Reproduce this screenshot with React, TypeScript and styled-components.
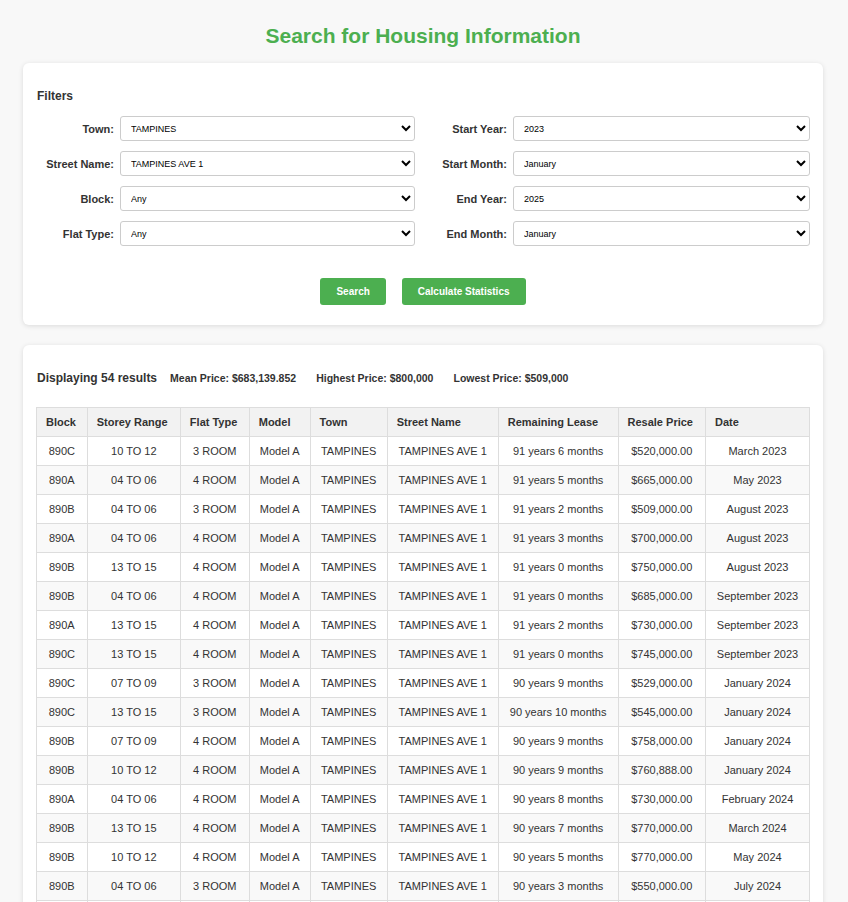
import React from "react";
import styled, { createGlobalStyle } from "styled-components";

const Global = createGlobalStyle`
  html, body { margin: 0; padding: 0; background: #f8f8f8; }
  body { font-family: "Liberation Sans", Arial, sans-serif; color: #333; }
`;

const Page = styled.div`
  padding: 22px 0 20px 23px;
  display: flex;
  flex-direction: column;
`;

const Title = styled.h1`
  margin: 0 0 13px;
  width: 800px;
  text-align: center;
  color: #4caf50;
  font-size: 21px;
  line-height: 28px;
  font-weight: bold;
`;

const Card = styled.section<{ $pt: number }>`
  box-sizing: border-box;
  width: 800px;
  background: #fff;
  border-radius: 6px;
  box-shadow: 0 1px 5px rgba(0, 0, 0, 0.12);
  padding: ${(p) => p.$pt}px 13px 20px 13px;
  & + & { margin-top: 20px; }
`;

const SectionTitle = styled.h3`
  margin: 0 0 13px 1px;
  font-size: 12px;
  line-height: 14px;
  font-weight: bold;
`;

const FilterGrid = styled.div`
  display: grid;
  grid-template-columns: 1fr 1fr;
  column-gap: 16px;
  row-gap: 10px;
`;

const Field = styled.label`
  display: flex;
  align-items: center;
  gap: 6px;
`;

const Label = styled.span<{ $w: number }>`
  width: ${(p) => p.$w}px;
  text-align: right;
  font-size: 11px;
  font-weight: bold;
  color: #333;
  flex-shrink: 0;
  white-space: nowrap;
`;

const Select = styled.select`
  flex: 1;
  height: 25px;
  border: 1px solid #ccc;
  border-radius: 3px;
  background: #fff;
  font-family: "Liberation Sans", Arial, sans-serif;
  font-size: 9px;
  color: #000;
  padding: 0 6px;
`;

const Buttons = styled.div`
  display: flex;
  justify-content: center;
  gap: 16px;
  margin-top: 32px;
`;

const Button = styled.button`
  height: 27px;
  padding: 0 16px;
  background: #4caf50;
  color: #fff;
  border: none;
  border-radius: 3px;
  font-family: "Liberation Sans", Arial, sans-serif;
  font-size: 10px;
  font-weight: bold;
  cursor: pointer;
`;

const Summary = styled.div`
  display: flex;
  align-items: baseline;
  gap: 13px;
  margin: 0 0 22px 1px;
  font-weight: bold;
`;

const Count = styled.span`
  font-size: 12px;
`;

const Stat = styled.span`
  font-size: 10.5px;
  margin-right: 7px;
`;

const Table = styled.table`
  width: 100%;
  border-collapse: collapse;
  font-size: 11px;
`;

const Th = styled.th`
  background: #f2f2f2;
  border: 1px solid #ddd;
  text-align: left;
  padding: 8px 9px;
  line-height: 12px;
  font-weight: bold;
`;

const Tr = styled.tr`
  &:nth-child(even) { background: #f9f9f9; }
`;

const Td = styled.td`
  border: 1px solid #ddd;
  text-align: center;
  padding: 8px 9px;
  line-height: 12px;
  white-space: nowrap;
`;

const rows: string[][] = [
  ["890C", "10 TO 12", "3 ROOM", "91 years 6 months", "$520,000.00", "March 2023"],
  ["890A", "04 TO 06", "4 ROOM", "91 years 5 months", "$665,000.00", "May 2023"],
  ["890B", "04 TO 06", "3 ROOM", "91 years 2 months", "$509,000.00", "August 2023"],
  ["890A", "04 TO 06", "4 ROOM", "91 years 3 months", "$700,000.00", "August 2023"],
  ["890B", "13 TO 15", "4 ROOM", "91 years 0 months", "$750,000.00", "August 2023"],
  ["890B", "04 TO 06", "4 ROOM", "91 years 0 months", "$685,000.00", "September 2023"],
  ["890A", "13 TO 15", "4 ROOM", "91 years 2 months", "$730,000.00", "September 2023"],
  ["890C", "13 TO 15", "4 ROOM", "91 years 0 months", "$745,000.00", "September 2023"],
  ["890C", "07 TO 09", "3 ROOM", "90 years 9 months", "$529,000.00", "January 2024"],
  ["890C", "13 TO 15", "3 ROOM", "90 years 10 months", "$545,000.00", "January 2024"],
  ["890B", "07 TO 09", "4 ROOM", "90 years 9 months", "$758,000.00", "January 2024"],
  ["890B", "10 TO 12", "4 ROOM", "90 years 9 months", "$760,888.00", "January 2024"],
  ["890A", "04 TO 06", "4 ROOM", "90 years 8 months", "$730,000.00", "February 2024"],
  ["890B", "13 TO 15", "4 ROOM", "90 years 7 months", "$770,000.00", "March 2024"],
  ["890B", "10 TO 12", "4 ROOM", "90 years 5 months", "$770,000.00", "May 2024"],
  ["890B", "04 TO 06", "3 ROOM", "90 years 3 months", "$550,000.00", "July 2024"],
  ["890A", "07 TO 09", "4 ROOM", "90 years 2 months", "$735,000.00", "August 2024"],
];

const leftFields = [
  { label: "Town:", value: "TAMPINES" },
  { label: "Street Name:", value: "TAMPINES AVE 1" },
  { label: "Block:", value: "Any" },
  { label: "Flat Type:", value: "Any" },
];
const rightFields = [
  { label: "Start Year:", value: "2023" },
  { label: "Start Month:", value: "January" },
  { label: "End Year:", value: "2025" },
  { label: "End Month:", value: "January" },
];

export default function App() {
  const fields: { label: string; value: string; w: number }[] = [];
  for (let i = 0; i < 4; i++) {
    fields.push({ ...leftFields[i], w: 78 });
    fields.push({ ...rightFields[i], w: 76 });
  }
  return (
    <>
      <Global />
      <Page>
        <Title>Search for Housing Information</Title>
        <Card $pt={26}>
          <SectionTitle>Filters</SectionTitle>
          <FilterGrid>
            {fields.map((f) => (
              <Field key={f.label}>
                <Label $w={f.w}>{f.label}</Label>
                <Select defaultValue={f.value}>
                  <option value={f.value}>{f.value}</option>
                </Select>
              </Field>
            ))}
          </FilterGrid>
          <Buttons>
            <Button>Search</Button>
            <Button>Calculate Statistics</Button>
          </Buttons>
        </Card>
        <Card $pt={26}>
          <Summary>
            <Count>Displaying 54 results</Count>
            <Stat>Mean Price: $683,139.852</Stat>
            <Stat>Highest Price: $800,000</Stat>
            <Stat>Lowest Price: $509,000</Stat>
          </Summary>
          <Table>
            <thead>
              <tr>
                {["Block", "Storey Range", "Flat Type", "Model", "Town", "Street Name", "Remaining Lease", "Resale Price", "Date"].map((h) => (
                  <Th key={h}>{h}</Th>
                ))}
              </tr>
            </thead>
            <tbody>
              {rows.map((r, i) => (
                <Tr key={i}>
                  <Td>{r[0]}</Td>
                  <Td>{r[1]}</Td>
                  <Td>{r[2]}</Td>
                  <Td>Model A</Td>
                  <Td>TAMPINES</Td>
                  <Td>TAMPINES AVE 1</Td>
                  <Td>{r[3]}</Td>
                  <Td>{r[4]}</Td>
                  <Td>{r[5]}</Td>
                </Tr>
              ))}
            </tbody>
          </Table>
        </Card>
      </Page>
    </>
  );
}
